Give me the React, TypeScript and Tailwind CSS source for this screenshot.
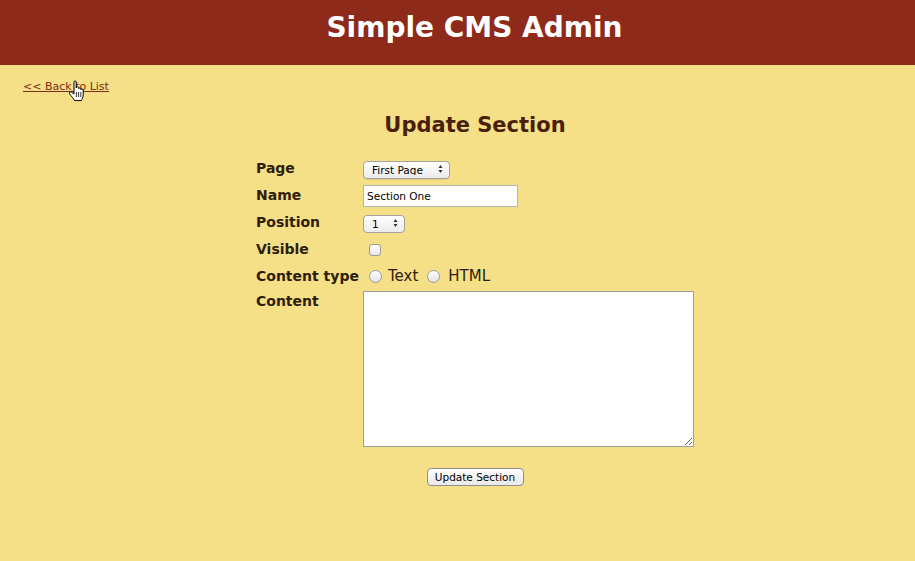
import { useState } from "react";

const sans = "font-['DejaVu_Sans','Verdana',sans-serif]";

function Arrows() {
  return (
    <svg width="5" height="9" viewBox="0 0 5 9" className="absolute right-[7px] top-1/2 -translate-y-1/2">
      <path d="M2.5 0.5 L4.5 3.5 L0.5 3.5 Z" fill="#333" />
      <path d="M2.5 8.5 L4.5 5.5 L0.5 5.5 Z" fill="#333" />
    </svg>
  );
}

function HandCursor() {
  return (
    <svg width="17" height="22" viewBox="0 0 17 22" className="absolute left-[68px] top-[80px] pointer-events-none">
      <path
        d="M6 1.8 C6 0.6 8.2 0.6 8.2 1.8 L8.2 8 L8.4 7.4 C8.4 6.4 10.6 6.4 10.6 7.4 L10.6 8.6 C10.8 7.8 12.8 7.8 12.8 8.8 L12.8 9.6 C13.1 8.9 15.2 8.9 15.2 10 L15.2 15 C15.2 17.4 13.8 19.3 13.4 20.6 L6.6 20.6 C5.6 19 3.2 15.8 1.6 13.8 C0.8 12.6 2 11.2 3.2 12 L6 14 Z"
        fill="#fff"
        stroke="#000"
        strokeWidth="1"
        strokeLinejoin="round"
      />
      <path d="M8.4 12 L8.4 17 M10.6 12 L10.6 17 M12.8 12 L12.8 17" stroke="#000" strokeWidth="0.8" />
    </svg>
  );
}

export default function App() {
  const [name, setName] = useState("Section One");

  return (
    <div className={`relative min-h-[561px] bg-[#f5df87] ${sans}`}>
      <header className="h-[65px] bg-[#8e2a19] flex items-center justify-center pl-[34px]">
        <h1 className="text-[28px] font-bold text-white leading-none -mt-[9px]">Simple CMS Admin</h1>
      </header>

      <div className="pl-[23px] pt-[8px] h-[48px]">
        <a href="#" className="text-[11px] text-[#7d2d12] underline">
          &lt;&lt; Back to List
        </a>
      </div>

      <div className="ml-[256px] w-[438px]">
        <h2 className="text-center text-[21px] font-bold text-[#4a1f0a] leading-[25px]">Update Section</h2>

        <form className="mt-[17px] text-[#2d1d0a]" onSubmit={(e) => e.preventDefault()}>
          <div className="flex items-center h-[27px]">
            <label className="w-[107px] text-[14px] font-bold">Page</label>
            <div className="relative">
              <select className="appearance-none w-[87px] h-[18px] rounded-[4px] border border-[#a3a3a3] bg-gradient-to-b from-white to-[#ececec] text-[10.5px] text-black pl-[8px] leading-none shadow-[0_1px_0_rgba(0,0,0,0.08)]">
                <option>First Page</option>
              </select>
              <Arrows />
            </div>
          </div>

          <div className="flex items-center h-[27px]">
            <label className="w-[107px] text-[14px] font-bold">Name</label>
            <input
              value={name}
              onChange={(e) => setName(e.target.value)}
              className="w-[155px] h-[22px] border border-[#b5b5b5] bg-white text-[10.5px] text-black px-[3px] outline-none"
            />
          </div>

          <div className="flex items-center h-[27px]">
            <label className="w-[107px] text-[14px] font-bold">Position</label>
            <div className="relative">
              <select className="appearance-none w-[42px] h-[18px] rounded-[4px] border border-[#a3a3a3] bg-gradient-to-b from-white to-[#ececec] text-[10.5px] text-black pl-[8px] leading-none">
                <option>1</option>
              </select>
              <Arrows />
            </div>
          </div>

          <div className="flex items-center h-[27px]">
            <label className="w-[107px] text-[14px] font-bold">Visible</label>
            <input
              type="checkbox"
              className="appearance-none ml-[6px] w-[12px] h-[12px] rounded-[3px] border border-[#9a9a9a] bg-gradient-to-b from-white to-[#e6e6e6]"
            />
          </div>

          <div className="flex items-center h-[27px]">
            <label className="w-[107px] text-[14px] font-bold whitespace-nowrap">Content type</label>
            <label className="flex items-center text-[15px] ml-[6px]">
              <input
                type="radio"
                name="ctype"
                className="appearance-none w-[13px] h-[13px] rounded-full border border-[#9a9a9a] bg-gradient-to-b from-white to-[#e2e2e2]"
              />
              <span className="ml-[6px]">Text</span>
            </label>
            <label className="flex items-center text-[15px] ml-[9px]">
              <input
                type="radio"
                name="ctype"
                className="appearance-none w-[13px] h-[13px] rounded-full border border-[#9a9a9a] bg-gradient-to-b from-white to-[#e2e2e2]"
              />
              <span className="ml-[8px]">HTML</span>
            </label>
          </div>

          <div className="flex items-start mt-[1px]">
            <label className="w-[107px] text-[14px] font-bold leading-[18px] pt-[1px]">Content</label>
            <textarea className="w-[331px] h-[156px] border border-[#9d9d9d] bg-white outline-none block" />
          </div>

          <div className="flex justify-center mt-[21px]">
            <button
              type="submit"
              className="w-[97px] h-[18px] rounded-[4px] border border-[#8f8f8f] bg-gradient-to-b from-white to-[#e9e9e9] text-[10.5px] text-black leading-none"
            >
              Update Section
            </button>
          </div>
        </form>
      </div>

      <HandCursor />
    </div>
  );
}
